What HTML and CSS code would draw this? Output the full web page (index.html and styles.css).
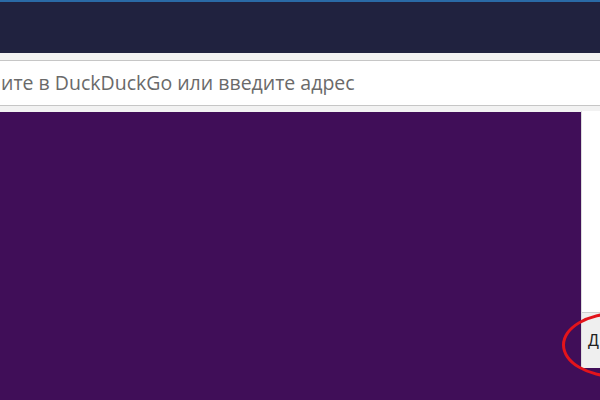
FILE: index.html
```html
<!DOCTYPE html>
<html lang="ru">
  <head>
    <meta charset="UTF-8" />
    <title>DuckDuckGo</title>
    <link rel="stylesheet" href="styles.css">
  </head>
  <body>
    <div class="window">
      <div class="titlebar"></div>
      <div class="toolbar">
        <div class="urlbar">ите в DuckDuckGo или введите адрес</div>
      </div>
      <div class="content">
        <div class="page"></div>
        <div class="sidebar">
          <div class="sidebar-list"></div>
          <div class="sidebar-foot">Д</div>
        </div>
      </div>
      <div class="highlight"></div>
    </div>
  </body>
</html>
```

FILE: styles.css
```css
body {
  margin: 0;
  font-family: "Open Sans", "Liberation Sans", sans-serif;
}

.window {
  position: relative;
  width: 600px;
  height: 400px;
  overflow: hidden;
  display: flex;
  flex-direction: column;
  background-color: #400e58;
}

.titlebar {
  height: 51px;
  border-top: 2px solid #2a6aa6;
  background-color: #20223f;
}

.toolbar {
  padding: 7px 0 6px;
  background-color: #f2f2f2;
}

.urlbar {
  height: 44px;
  line-height: 44px;
  padding-left: 1px;
  background-color: #fff;
  border-top: 1px solid #c6c6c6;
  border-bottom: 1px solid #c6c6c6;
  color: #6a6a6a;
  font-size: 19.5px;
  white-space: nowrap;
}

.content {
  flex: 1;
  display: flex;
  align-items: flex-start;
}

.page {
  flex: 1;
}

.sidebar {
  width: 18px;
  height: 257px;
  margin-top: -1px;
  display: flex;
  flex-direction: column;
  border-left: 1px solid #dcdcdc;
}

.sidebar-list {
  flex: 1;
  background-color: #fff;
}

.sidebar-foot {
  height: 55px;
  line-height: 55px;
  padding-left: 6px;
  background-color: #efefef;
  border-top: 1px solid #d0d0d0;
  color: #222;
  font-family: "Liberation Sans", sans-serif;
  font-size: 16px;
  overflow: hidden;
}

.highlight {
  position: absolute;
  left: 562px;
  top: 312px;
  width: 104px;
  height: 60px;
  border: 3px solid #e3141b;
  border-radius: 50%;
}
```
